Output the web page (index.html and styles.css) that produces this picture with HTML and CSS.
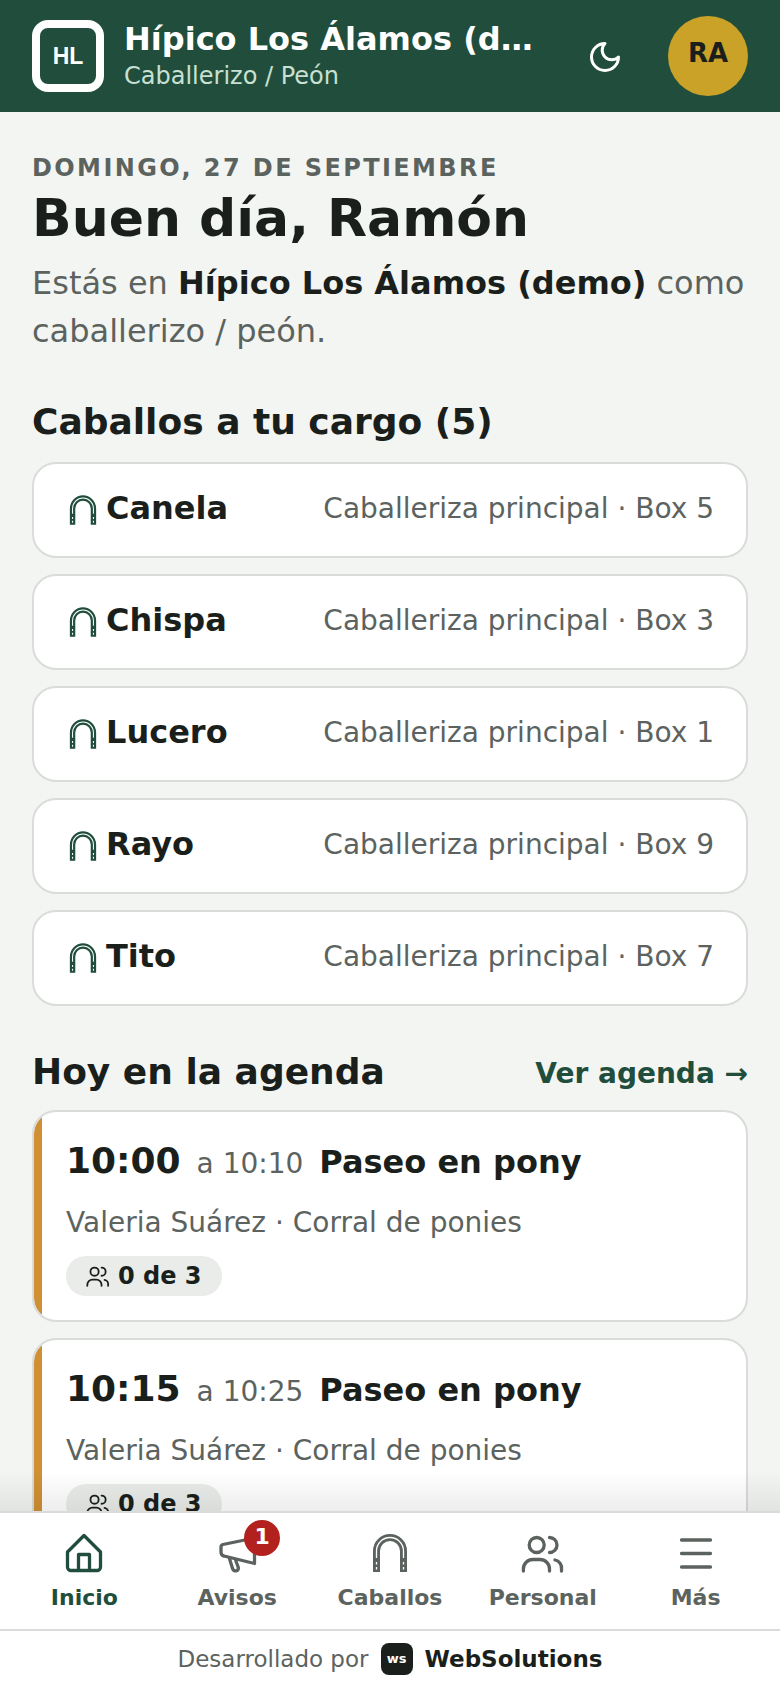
FILE: index.html
```html
<!DOCTYPE html>
<html lang="es">
<head>
    <meta charset="UTF-8">
    <meta name="viewport" content="width=device-width, initial-scale=1.0">
    <title>Hípico Los Álamos</title>
    <link rel="stylesheet" href="styles.css">
</head>
<body>
    <svg class="sprite" width="0" height="0">
        <symbol id="shoe" viewBox="0 0 44 44">
            <path d="M8.500 41V20a13.500 13.500 0 0 1 27 0v21" fill="none" stroke="currentColor" stroke-width="7"/>
            <path d="M8.500 27v-7a13.500 13.500 0 0 1 27 0v7M8.500 31v2.500M8.500 36v2.500M35.500 31v2.500M35.500 36v2.500" fill="none" stroke="#fff" stroke-width="1.300"/>
        </symbol>
        <symbol id="people" viewBox="0 0 44 44">
            <circle cx="15.700" cy="14" r="7.500" fill="none" stroke="currentColor" stroke-width="3.300"/>
            <path d="M2.400 40v-2a9.500 9.500 0 0 1 9.500-9.500H19a9.500 9.500 0 0 1 9.500 9.500v2M28.500 6.500a7.500 7.500 0 0 1 0 15M34 29a8 8 0 0 1 6.500 9v2" fill="none" stroke="currentColor" stroke-width="3.300" stroke-linecap="round"/>
        </symbol>
    </svg>

    <!-- Top bar -->
    <header class="topbar">
        <div class="logo"><span>HL</span></div>
        <div class="brand">
            <div class="brand-name">Hípico Los Álamos (demo)</div>
            <div class="brand-role">Caballerizo / Peón</div>
        </div>
        <svg class="moon" viewBox="0 0 24 24"><path d="M12 3a6 6 0 0 0 9 9 9 9 0 1 1-9-9z" fill="none" stroke="#fff" stroke-width="2" stroke-linejoin="round"/></svg>
        <div class="avatar">RA</div>
    </header>

    <!-- Scrolling content -->
    <main class="content">
        <div class="date">DOMINGO, 27 DE SEPTIEMBRE</div>
        <h1>Buen día, Ramón</h1>
        <p class="intro">Estás en <strong>Hípico Los Álamos (demo)</strong> como caballerizo / peón.</p>

        <h2>Caballos a tu cargo (5)</h2>
        <div class="horse-list">
            <div class="horse">
                <svg class="horse-icon"><use href="#shoe"/></svg>
                <span class="horse-name">Canela</span>
                <span class="horse-place">Caballeriza principal · Box 5</span>
            </div>
            <div class="horse">
                <svg class="horse-icon"><use href="#shoe"/></svg>
                <span class="horse-name">Chispa</span>
                <span class="horse-place">Caballeriza principal · Box 3</span>
            </div>
            <div class="horse">
                <svg class="horse-icon"><use href="#shoe"/></svg>
                <span class="horse-name">Lucero</span>
                <span class="horse-place">Caballeriza principal · Box 1</span>
            </div>
            <div class="horse">
                <svg class="horse-icon"><use href="#shoe"/></svg>
                <span class="horse-name">Rayo</span>
                <span class="horse-place">Caballeriza principal · Box 9</span>
            </div>
            <div class="horse">
                <svg class="horse-icon"><use href="#shoe"/></svg>
                <span class="horse-name">Tito</span>
                <span class="horse-place">Caballeriza principal · Box 7</span>
            </div>
        </div>

        <div class="section-head">
            <h2>Hoy en la agenda</h2>
            <a class="section-link">Ver agenda →</a>
        </div>
        <div class="agenda">
            <div class="event">
                <div class="event-top">
                    <span class="event-time">10:00</span>
                    <span class="event-end">a 10:10</span>
                    <span class="event-title">Paseo en pony</span>
                </div>
                <div class="event-meta">Valeria Suárez · Corral de ponies</div>
                <div class="pill"><svg class="pill-icon"><use href="#people"/></svg>0 de 3</div>
            </div>
            <div class="event">
                <div class="event-top">
                    <span class="event-time">10:15</span>
                    <span class="event-end">a 10:25</span>
                    <span class="event-title">Paseo en pony</span>
                </div>
                <div class="event-meta">Valeria Suárez · Corral de ponies</div>
                <div class="pill"><svg class="pill-icon"><use href="#people"/></svg>0 de 3</div>
            </div>
        </div>
        <div class="fade"></div>
    </main>

    <!-- Bottom navigation -->
    <nav class="tabs">
        <div class="tab active">
            <svg class="tab-icon" viewBox="0 0 44 44"><path d="M5.500 21 22 4.500 38.500 21v15a3.500 3.500 0 0 1-3.500 3.500H9A3.500 3.500 0 0 1 5.500 36zM16.500 39.500v-16h11v16" fill="none" stroke="currentColor" stroke-width="3.300" stroke-linejoin="round"/></svg>
            <span>Inicio</span>
        </div>
        <div class="tab">
            <span class="tab-icon-wrap">
                <svg class="tab-icon" viewBox="0 0 44 44"><path d="M8 13.500 39.500 7v25.500L9 25q-3-.5-3-4v-5q0-2 2-2.500zM14 26l3.500 11.500q1.500 3.500 4.500 2 2-1 1-4L20.500 29" fill="none" stroke="currentColor" stroke-width="3.300" stroke-linejoin="round"/></svg>
                <span class="badge">1</span>
            </span>
            <span>Avisos</span>
        </div>
        <div class="tab">
            <svg class="tab-icon"><use href="#shoe"/></svg>
            <span>Caballos</span>
        </div>
        <div class="tab">
            <svg class="tab-icon"><use href="#people"/></svg>
            <span>Personal</span>
        </div>
        <div class="tab">
            <svg class="tab-icon" viewBox="0 0 44 44"><path d="M7.500 9h29M7.500 22.500h29M7.500 36h29" fill="none" stroke="currentColor" stroke-width="3.300" stroke-linecap="round"/></svg>
            <span>Más</span>
        </div>
    </nav>

    <footer class="credit">
        Desarrollado por
        <span class="ws-logo">ws</span>
        <strong>WebSolutions</strong>
    </footer>
</body>
</html>
```

FILE: styles.css
```css
* {
    box-sizing: border-box;
}
body {
    display: flex;
    flex-direction: column;
    height: 100vh;
    margin: 0;
    overflow: hidden;
    font-family: "DejaVu Sans", sans-serif;
    color: #1a1f1c;
    background-color: #f3f5f3;
}
.sprite {
    position: absolute;
}

/* top bar */
.topbar {
    display: flex;
    align-items: center;
    flex: none;
    height: 112px;
    padding: 0 32px;
    background-color: #214e3c;
    color: #fff;
}
.logo {
    display: flex;
    flex: none;
    align-items: center;
    justify-content: center;
    width: 72px;
    height: 72px;
    border: 8px solid #fff;
    border-radius: 16px;
    font-family: "Liberation Sans", sans-serif;
    font-size: 23px;
    font-weight: 700;
}
.brand {
    flex: 1;
    min-width: 0;
    margin-left: 20px;
}
.brand-name {
    overflow: hidden;
    font-size: 32px;
    font-weight: 700;
    line-height: 38px;
    white-space: nowrap;
    text-overflow: ellipsis;
    margin-top: -2px;
}
.brand-role {
    margin-top: 3px;
    font-size: 24px;
    line-height: 30px;
    color: #c9e0d2;
}
.moon {
    flex: none;
    width: 36px;
    height: 36px;
    margin: 2px 45px 0 38px;
}
.avatar {
    display: flex;
    flex: none;
    align-items: center;
    justify-content: center;
    width: 80px;
    height: 80px;
    padding-bottom: 6px;
    border-radius: 50%;
    background-color: #c9a227;
    color: #1a1f1c;
    font-size: 26px;
    font-weight: 700;
}

/* content */
.content {
    position: relative;
    flex: 1;
    min-height: 0;
    overflow: hidden;
    padding: 41px 32px 0;
}
.date {
    font-size: 24px;
    font-weight: 700;
    line-height: 30px;
    letter-spacing: 2.4px;
    color: #5c635f;
}
h1 {
    margin: 4px 0 0;
    font-size: 52px;
    line-height: 62px;
}
.intro {
    margin: 10px 0 0;
    font-size: 32px;
    line-height: 48px;
    color: #5c635f;
}
.intro strong {
    color: #1a1f1c;
}
h2 {
    margin: 45px 0 18px;
    font-size: 36px;
    line-height: 44px;
}
.horse-list,
.agenda {
    display: flex;
    flex-direction: column;
    gap: 16px;
}
.horse {
    display: flex;
    align-items: center;
    height: 96px;
    padding: 0 32px;
    border: 2px solid #d9dcd9;
    border-radius: 24px;
    background-color: #fff;
}
.horse-icon {
    width: 34px;
    height: 34px;
    margin-right: 6px;
    color: #214e3c;
}
.horse-name {
    flex: 1;
    margin-bottom: 4px;
    font-size: 32px;
    font-weight: 700;
}
.horse-place {
    margin-bottom: 3px;
    font-size: 28px;
    color: #5c635f;
}
.section-head {
    display: flex;
    align-items: center;
    justify-content: space-between;
    margin: 44px 0 16px;
}
.section-head h2 {
    margin: 0;
}
.section-link {
    margin-top: 2px;
    font-size: 28px;
    font-weight: 700;
    color: #214e3c;
}
.event {
    height: 212px;
    padding: 25px 32px 0;
    border: 2px solid #d9dcd9;
    border-radius: 24px;
    background: linear-gradient(#d08f33, #d08f33) left / 8px 100% no-repeat #fff;
    background-clip: padding-box;
}
.event-top {
    display: flex;
    align-items: baseline;
    line-height: 48px;
}
.event-time {
    font-size: 36px;
    font-weight: 700;
}
.event-end {
    margin-left: 16px;
    font-size: 28px;
    color: #5c635f;
}
.event-title {
    margin-left: 16px;
    font-size: 32px;
    font-weight: 700;
}
.event-meta {
    margin-top: 15px;
    font-size: 28px;
    line-height: 40px;
    color: #5c635f;
}
.pill {
    display: inline-flex;
    align-items: center;
    height: 40px;
    margin-top: 13px;
    padding: 0 20px;
    border-radius: 20px;
    background-color: #e9ece9;
    font-size: 24px;
    font-weight: 700;
}
.pill-icon {
    width: 24px;
    height: 24px;
    margin-right: 8px;
}
.fade {
    position: absolute;
    left: 0;
    right: 0;
    bottom: 0;
    height: 40px;
    background: linear-gradient(rgba(0, 0, 0, 0), rgba(0, 0, 0, 0.07));
}

/* bottom nav */
.tabs {
    display: flex;
    flex: none;
    height: 118px;
    padding: 0 8px;
    border-top: 2px solid #d9dcd9;
    background-color: #fff;
}
.tab {
    display: flex;
    flex: 1;
    flex-direction: column;
    align-items: center;
    padding-top: 18px;
    font-size: 22px;
    font-weight: 700;
    color: #5c635f;
}
.tab.active {
    color: #214e3c;
}
.tab-icon-wrap {
    position: relative;
    height: 44px;
}
.tab-icon {
    display: block;
    width: 44px;
    height: 44px;
    margin-bottom: 10px;
}
.badge {
    position: absolute;
    top: -11px;
    left: 29px;
    width: 36px;
    height: 36px;
    border-radius: 50%;
    background-color: #b3211f;
    color: #fff;
    font-size: 22px;
    line-height: 34px;
    text-align: center;
}
.tab-icon-wrap + span {
    margin-top: 10px;
}
.credit {
    display: flex;
    flex: none;
    align-items: center;
    justify-content: center;
    height: 59px;
    padding-bottom: 2px;
    border-top: 2px solid #d9dcd9;
    background-color: #fff;
    font-size: 23px;
    color: #5c635f;
}
.ws-logo {
    display: flex;
    align-items: center;
    justify-content: center;
    width: 32px;
    height: 32px;
    margin: 0 12px;
    border-radius: 8px;
    background-color: #1a1f1c;
    color: #fff;
    font-size: 13px;
    font-weight: 700;
}
.credit strong {
    color: #1a1f1c;
}
```
